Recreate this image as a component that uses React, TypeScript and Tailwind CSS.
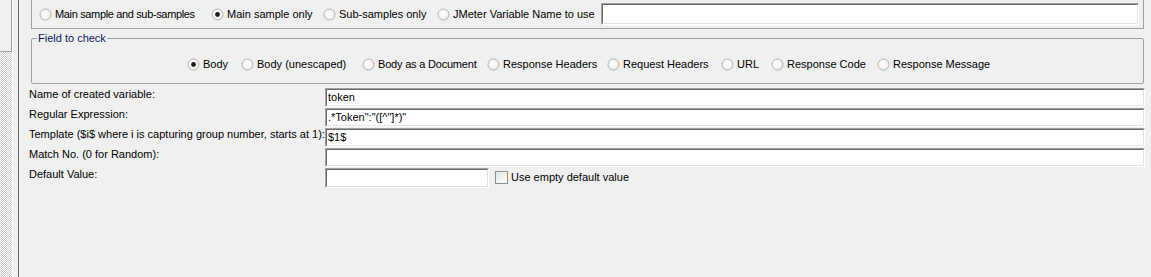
import React from "react";

const Radio = ({ checked = false }: { checked?: boolean }) => (
  <svg width="13" height="13" viewBox="0 0 13 13" className="shrink-0">
    <defs>
      <radialGradient id={checked ? "rg1" : "rg0"} cx="0.45" cy="0.45" r="0.6">
        <stop offset="0" stopColor="#ffffff" />
        <stop offset="0.7" stopColor="#f2f2f2" />
        <stop offset="1" stopColor="#d9d9d9" />
      </radialGradient>
    </defs>
    <circle cx="6.5" cy="6.5" r="5.5" fill={`url(#${checked ? "rg1" : "rg0"})`} stroke="#b4b4b4" strokeWidth="1" />
    {checked && <circle cx="6.5" cy="6.5" r="2.4" fill="#1a1a1a" />}
  </svg>
);

const RadioItem = ({ label, checked = false, w }: { label: string; checked?: boolean; w: string }) => (
  <div className="flex items-center gap-[3px] shrink-0">
    <Radio checked={checked} />
    <span className={`leading-[13px] whitespace-nowrap ${w}`}>{label}</span>
  </div>
);

const Input = ({ value = "", className = "" }: { value?: string; className?: string }) => (
  <div
    className={`border-t border-l border-t-[#a0a0a0] border-l-[#a0a0a0] border-b border-r border-b-white border-r-white ${className}`}
  >
    <div className="h-full border-t border-l border-t-[#696969] border-l-[#696969] border-b border-r border-b-[#e3e3e3] border-r-[#e3e3e3] bg-white flex items-center pl-[1px] leading-[13px] whitespace-nowrap overflow-hidden">
      {value}
    </div>
  </div>
);

const Row = ({ label, children }: { label: string; children: React.ReactNode }) => (
  <div className="flex items-start h-[20px]">
    <div className="w-[296px] shrink-0 leading-[13px] whitespace-nowrap">{label}</div>
    <div className="flex-1 flex items-start">{children}</div>
  </div>
);

export default function App() {
  return (
    <div
      className="flex w-[1151px] h-[277px] bg-[#f0f0f0] overflow-hidden text-[11px] text-black"
      style={{ fontFamily: '"Liberation Sans", Arial, sans-serif' }}
    >
      {/* left splitter area */}
      <div className="w-[12px] shrink-0 flex flex-col">
        <div className="h-[52px] border-r border-b border-[#a0a0a0]" />
        <div className="flex-1 bg-[repeating-conic-gradient(#c8c8c8_0%_25%,#ffffff_0%_50%)] bg-[length:2px_2px]" />
      </div>
      <div className="w-[6px] shrink-0 border-l border-white" />

      {/* main panel */}
      <div className="flex-1 border-l border-[#696969] flex flex-col">
        {/* apply-to group */}
        <div className="ml-[12px] mr-[7px] h-[29px] border-l border-r border-b border-[#a0a0a0] flex items-center pl-[7px] pr-[4px] gap-[15px]">
          <RadioItem label="Main sample and sub-samples" w="w-[141px] tracking-[-0.35px]" />
          <RadioItem label="Main sample only" checked w="w-[81px]" />
          <RadioItem label="Sub-samples only" w="w-[83px]" />
          <RadioItem label="JMeter Variable Name to use" w="w-[133px]" />
          <Input className="flex-1 h-[22px]" />
        </div>

        {/* field to check group */}
        <div className="relative ml-[12px] mr-[7px] mt-[9px] h-[46px] border border-[#a0a0a0] rounded-[2px]">
          <div className="absolute -top-[7px] left-[5px] px-[1px] bg-[#f0f0f0] leading-[13px] text-[#0a1a5c]">
            Field to check
          </div>
          <div className="flex justify-center items-center gap-[13px] pt-[19px] pr-[3px]">
            <RadioItem label="Body" checked w="w-[25px]" />
            <RadioItem label="Body (unescaped)" w="w-[92px]" />
            <RadioItem label="Body as a Document" w="w-[96px] tracking-[-0.2px]" />
            <RadioItem label="Response Headers" w="w-[91px]" />
            <RadioItem label="Request Headers" w="w-[85px]" />
            <RadioItem label="URL" w="w-[21px]" />
            <RadioItem label="Response Code" w="w-[77px]" />
            <RadioItem label="Response Message" w="w-[92px]" />
          </div>
        </div>

        {/* fields */}
        <div className="mt-[4px] pl-[10px] pr-[6px] flex flex-col">
          <Row label="Name of created variable:">
            <Input value="token" className="flex-1 h-[19px]" />
          </Row>
          <Row label="Regular Expression:">
            <Input value={'.*Token":"([^"]*)"'} className="flex-1 h-[19px]" />
          </Row>
          <Row label="Template ($i$ where i is capturing group number, starts at 1):">
            <Input value="$1$" className="flex-1 h-[19px]" />
          </Row>
          <Row label="Match No. (0 for Random):">
            <Input className="flex-1 h-[19px]" />
          </Row>
          <Row label="Default Value:">
            <Input className="w-[164px] h-[20px]" />
            <div className="flex items-center ml-[6px] mt-[3px] gap-[3px]">
              <div className="w-[13px] h-[13px] border border-[#8f8f8f] bg-gradient-to-br from-[#e6e6e6] to-white" />
              <span className="leading-[13px] whitespace-nowrap">Use empty default value</span>
            </div>
          </Row>
        </div>
      </div>
    </div>
  );
}
